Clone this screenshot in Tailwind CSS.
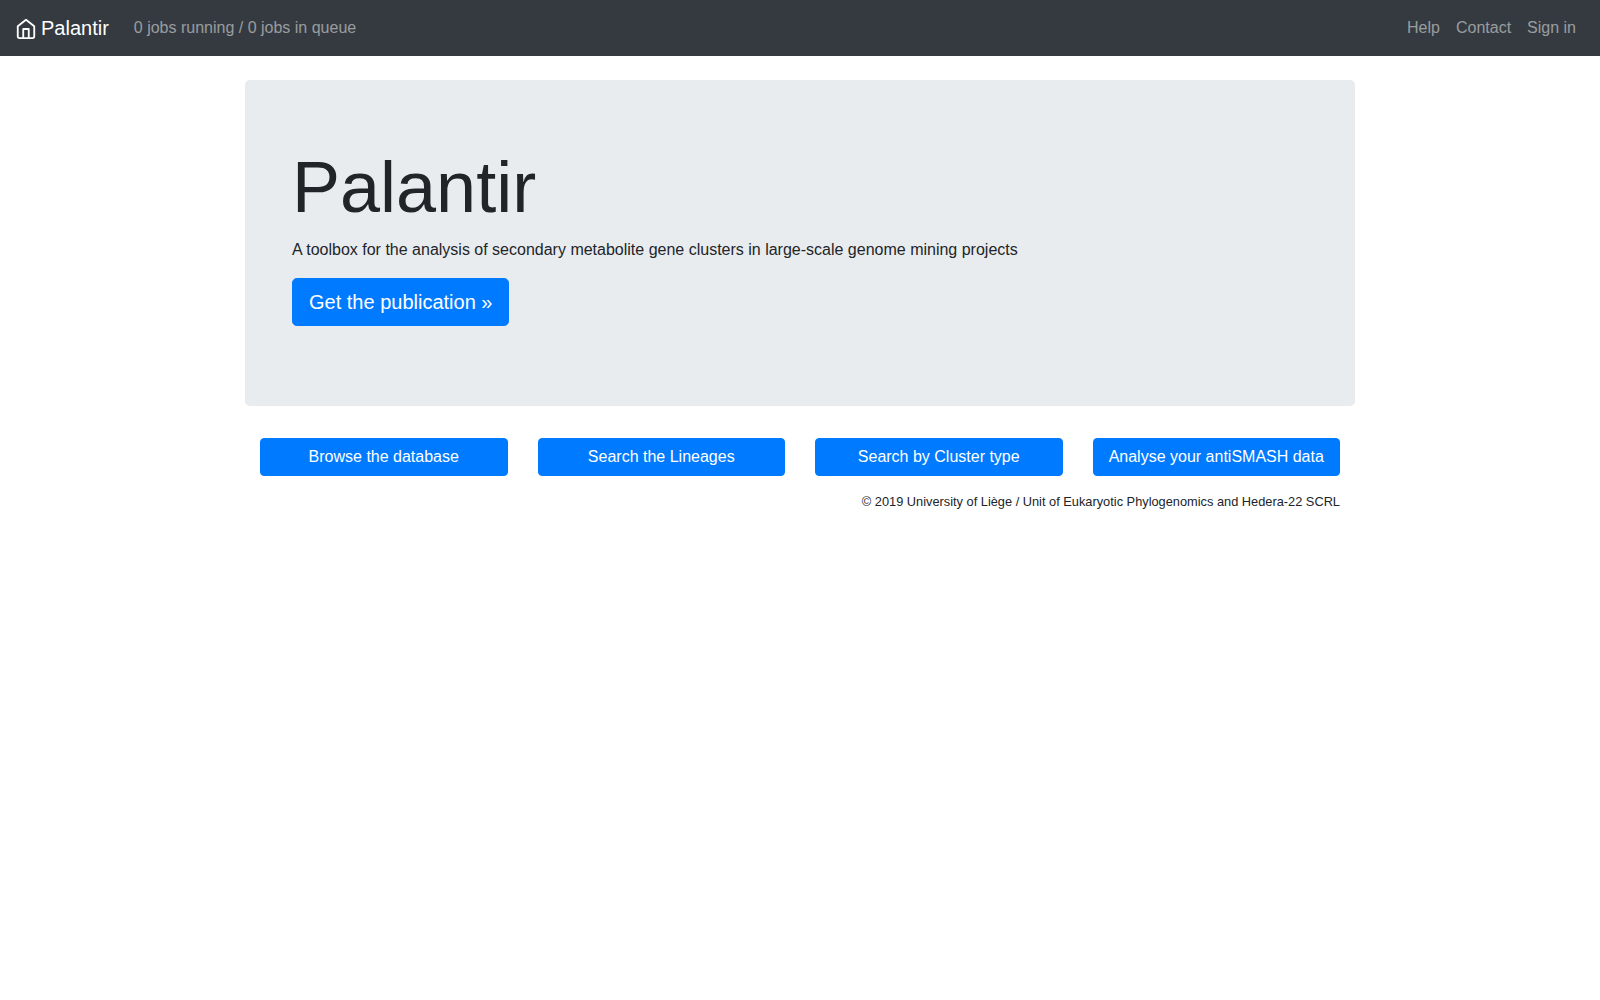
<!doctype html>
<html lang="en">
<head>
<meta charset="utf-8">
<title>Palantir</title>
<script src="https://cdn.jsdelivr.net/npm/@tailwindcss/browser@4"></script>
</head>
<body class="bg-white text-[#212529] font-['Liberation_Sans',Arial,sans-serif] text-[16px] leading-[1.5]">
<nav class="flex items-center justify-between h-14 bg-[#343a40] px-4">
  <div class="flex items-center">
    <a href="#" class="flex items-center text-white text-[20px] leading-[30px] mr-[17px]">
      <svg class="-ml-px mr-1 mt-[2px]" width="22" height="22" viewBox="0 0 24 24" fill="none" stroke="currentColor" stroke-width="2" stroke-linecap="round" stroke-linejoin="round"><path d="M3 9l9-7 9 7v11a2 2 0 0 1-2 2H5a2 2 0 0 1-2-2z"/><polyline points="9 22 9 12 15 12 15 22"/></svg>
      Palantir
    </a>
    <span class="px-2 text-[#ffffff80]">0 jobs running / 0 jobs in queue</span>
  </div>
  <div class="flex items-center text-[#ffffff80]">
    <a href="#" class="px-2">Help</a>
    <a href="#" class="px-2">Contact</a>
    <a href="#" class="px-2">Sign in</a>
  </div>
</nav>
<main class="w-[1110px] mx-auto mt-6">
  <section class="bg-[#e9ecef] rounded-[4.8px] py-16 px-[47px]">
    <h1 class="text-[72px] leading-[1.2] font-light mb-2">Palantir</h1>
    <p class="mb-4">A toolbox for the analysis of secondary metabolite gene clusters in large-scale genome mining projects</p>
    <p class="mb-4"><a href="#" class="inline-block bg-[#007bff] text-white text-[20px] leading-[30px] px-4 py-2 rounded-[4.8px] border border-[#007bff]">Get the publication »</a></p>
  </section>
  <div class="grid grid-cols-4 mt-8">
    <div class="px-[15px]"><a href="#" class="block text-center bg-[#007bff] text-white px-3 py-[6px] border border-[#007bff] rounded">Browse the database</a></div>
    <div class="px-[15px]"><a href="#" class="block text-center bg-[#007bff] text-white px-3 py-[6px] border border-[#007bff] rounded">Search the Lineages</a></div>
    <div class="px-[15px]"><a href="#" class="block text-center bg-[#007bff] text-white px-3 py-[6px] border border-[#007bff] rounded">Search by Cluster type</a></div>
    <div class="px-[15px]"><a href="#" class="block text-center bg-[#007bff] text-white px-3 py-[6px] border border-[#007bff] rounded">Analyse your antiSMASH data</a></div>
  </div>
  <p class="text-right text-[12.8px] leading-[19.2px] mt-4 px-[15px]">© 2019 University of Liège / Unit of Eukaryotic Phylogenomics and Hedera-22 SCRL</p>
</main>
</body>
</html>
